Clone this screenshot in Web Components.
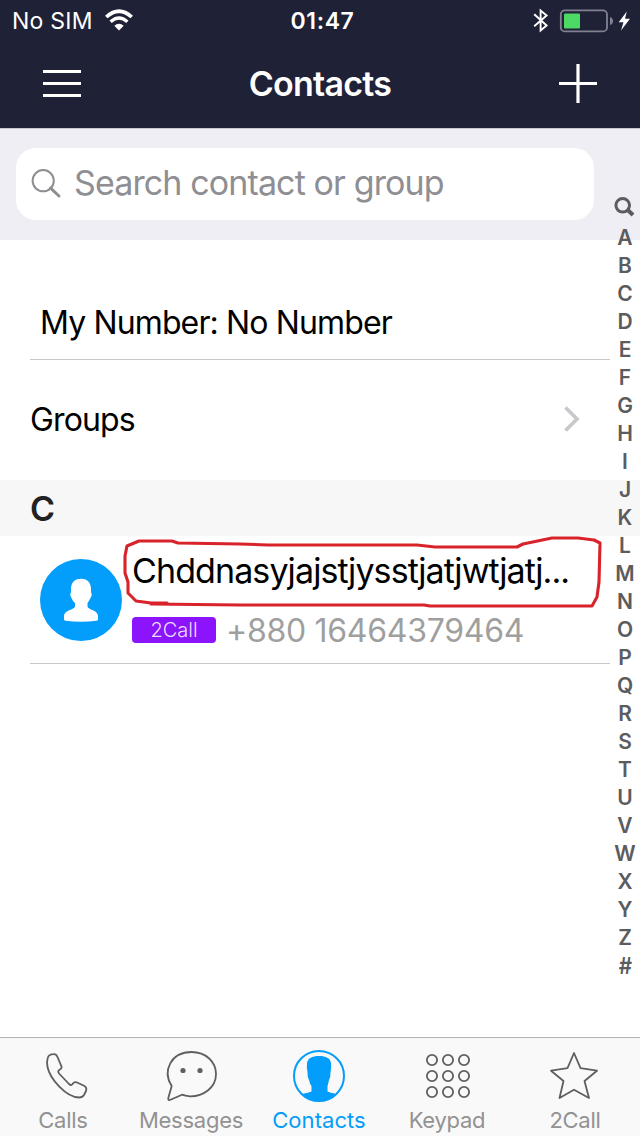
<!DOCTYPE html>
<html lang="en">
<head>
<meta charset="utf-8">
<title>Contacts</title>
<style>
html,body{margin:0;padding:0;background:#fff}
body{font-family:Inter,"Liberation Sans",sans-serif;color:#000;width:640px;height:1136px;overflow:hidden}
</style>
</head>
<body>
<contacts-app></contacts-app>
<script>
const define = (name, css, html) => customElements.define(name, class extends HTMLElement {
  constructor() {
    super();
    const t = document.createElement('template');
    t.innerHTML = `<style>*{box-sizing:border-box}svg{display:block;flex:none;overflow:visible}${css}</style>${typeof html === 'function' ? html(this) : html}`;
    this.attachShadow({mode: 'open'}).appendChild(t.content.cloneNode(true));
  }
});

define('status-bar', `
:host{display:grid;grid-template-columns:1fr auto 1fr;align-items:center;height:40px;padding:1px 11px 0 12px;color:#fff;font-size:23px;line-height:40px;white-space:nowrap}
.l,.r{display:flex;align-items:center}
.l{letter-spacing:.25px}.l svg{margin-left:12px}svg{margin-top:-1px}
.r{justify-content:flex-end}.r svg{margin-top:-3px}
.t{font-weight:600;letter-spacing:.6px;margin-left:4px}`, `
<div class="l"><span>No SIM</span>
<svg width="28" height="21" viewBox="0 0 28 21"><g fill="none" stroke="#fff"><path d="M1.3 7Q14-4.6 26.7 7" stroke-width="3.7"/><path d="M5.6 11.7Q14 4.2 22.4 11.7" stroke-width="3.3"/></g><path d="M9.3 15.8Q14 11.6 18.7 15.8L14 20.5Z" fill="#fff"/></svg></div>
<div class="t">01:47</div>
<div class="r">
<svg width="16" height="26" viewBox="0 0 16 26"><path d="M1.2 7.3L13.6 18.5L7.6 23.5V3.5L13.6 8.5L1.2 19.3" fill="none" stroke="#fff" stroke-width="1.9"/></svg>
<svg width="70" height="26" viewBox="0 0 70 26" style="margin-left:10px"><rect x="1.8" y="3.4" width="46.2" height="21" rx="4" fill="none" stroke="#808290" stroke-width="1.8"/><rect x="5" y="6.5" width="16" height="15" rx="1" fill="#4cd964"/><path d="M51 10Q54 11 54 14T51 18Z" fill="#808290"/><path d="M67.8 4.5L59.7 15.2H64.5L62 23.5L71 11.8H66Z" fill="#fff"/></svg></div>`);

define('nav-bar', `
:host{display:flex;align-items:center;justify-content:space-between;height:88px;padding:0 43px;color:#fff}
h1{margin:0;font-size:34px;font-weight:600;line-height:88px;letter-spacing:-.75px;height:88px}`, `
<svg width="38" height="40" viewBox="0 0 38 40"><path d="M0 7.5H38M0 19.5H38M0 31.5H38" stroke="#fff" stroke-width="3"/></svg>
<h1><slot></slot></h1>
<svg width="38" height="40" viewBox="0 0 38 40"><path d="M0 19.5H38M19 0V39" stroke="#fff" stroke-width="3.2"/></svg>`);

define('search-box', `
:host{display:block;height:112px;padding:19px 46px 20px 16px;background:#efeef4;border-top:1px solid #c6c6cc}
.b{display:flex;align-items:center;height:72px;border-radius:20px;background:#fff;padding:0 0 0 15px;color:#8e8e93;font-size:34px}
span{margin-left:13px;line-height:70px;height:72px;white-space:nowrap;letter-spacing:-.88px}`, `
<div class="b"><svg width="30" height="30" viewBox="0 0 30 30"><circle cx="12.2" cy="11.7" r="10.6" fill="none" stroke="#8e8e93" stroke-width="2"/><path d="M19.6 19.1L28 27" stroke="#8e8e93" stroke-width="3" stroke-linecap="round"/></svg><span><slot></slot></span></div>`);

define('list-row', `
:host{display:flex;align-items:center;justify-content:space-between;height:120px;margin-left:30px;width:580px;padding:0 30px 0 0;font-size:32px;line-height:40px;letter-spacing:-.87px;white-space:nowrap}
:host([ruled]){border-bottom:1px solid #c8c7cc;padding:47px 0 0 10px}
svg{margin-top:-2px}`, h => `
<span><slot></slot></span>${h.hasAttribute('arrow') ? '<svg width="18" height="28" viewBox="0 0 18 28"><path d="M3.5 2.5L15 14L3.5 25.5" fill="none" stroke="#c7c7cc" stroke-width="3.6"/></svg>' : ''}`);

define('section-header', `
:host{display:flex;align-items:center;height:56px;padding:1px 0 0 30px;background:#f7f7f7;color:#222;font-size:34px;font-weight:600}`, `<slot></slot>`);

define('contact-row', `
:host{display:flex;position:relative;height:128px;width:580px;margin-left:30px;padding-left:10px;border-bottom:1px solid #c8c7cc;white-space:nowrap}
.av{margin-top:23px}
.c{display:flex;flex-direction:column;margin-left:10px}
.n{font-size:34px;line-height:40px;margin-top:15px;letter-spacing:-.9px}
.p{display:flex;align-items:center;gap:10px;margin-top:19px;height:40px;color:#9f9f9f;font-size:32px;font-weight:400}
.ph{letter-spacing:-.28px}
.tag{width:84px;height:26px;border-radius:4px;background:#8b14fd;color:#eadcff;font-size:20px;font-weight:300;line-height:26px;text-align:center}
.mark{position:absolute;left:90px;top:-6px}`, `
<svg class="av" width="82" height="82" viewBox="0 0 82 82"><circle cx="41" cy="41" r="41" fill="#039dfc"/><path d="M41 19.8C48 19.8 51 24.5 51 30V33.5Q52.5 34.5 51 38Q49 42 47.5 44V47.5C48 51 58 51 58 57V60.5Q58 61.5 56.5 61.8Q41 63.5 25.5 61.8Q24 61.5 24 60.5V57C24 51 34.5 51 35 47.5V44Q32.5 42 31 38Q29.5 34.5 31 33.5V30C31 24.5 34 19.8 41 19.8Z" fill="#fff"/></svg>
<div class="c"><div class="n"><slot name="name"></slot></div>
<div class="p"><span class="tag"><slot name="tag"></slot></span><span class="ph"><slot name="phone"></slot></span></div></div>
<svg class="mark" width="484" height="80" viewBox="120 530 484 80"><path d="M167 603H151L136 601L128 593V582L125 573V556L127 546L139 541H172L178 543L240 544L268 545H417L435 547H517L523 544L552 538H578L594 540L600 543L599 582L597 597L592 606H430L424 605H320L240 605L151 604" fill="none" stroke="#d9232b" stroke-width="3.1" stroke-linejoin="round" stroke-linecap="round"/></svg>`);

define('alpha-index', `
:host{display:flex;flex-direction:column;align-items:center;position:absolute;left:610px;top:195px;width:30px;color:#5c5c5e;font-size:21px;font-weight:600}
svg{margin:2px 0 4px;height:23px}
span{height:28.03px;line-height:28px}
.h{font-size:23px;transform:scaleX(.9)}`, `
<svg width="22" height="23" viewBox="0 0 22 23"><circle cx="8.7" cy="8.3" r="6.8" fill="none" stroke="#5c5c5e" stroke-width="3"/><path d="M13.5 12.8L19 18" stroke="#5c5c5e" stroke-width="4"/></svg>
${[...'ABCDEFGHIJKLMNOPQRSTUVWXYZ'].map(c => `<span>${c}</span>`).join('')}<span class="h">#</span>`);

const icons = {
calls: '<path d="M57.5 1057Q56.3 1054 53.5 1054.2Q48.8 1054.3 47.7 1058Q46.4 1062 47.5 1067C50 1079 66 1097 79 1097.5Q82.5 1097.5 84 1095L86 1091Q87.3 1087.5 84 1085.8L76.5 1082.3Q74.2 1081.5 72.6 1084Q71.2 1086 69 1084L59.5 1074Q57 1071 59.5 1069.7Q62.5 1068 61.3 1066Z"/>',
messages: '<path d="M171.7 1086C162 1071 171 1052 191.5 1052C206 1052 216 1062 216 1074C216 1088 203 1096.5 190 1096.3Q185 1096 182 1094.7L170.5 1099.8Q168 1101 168.3 1098Z"/><g fill="#5f5f5f"><circle cx="183" cy="1070.5" r="1.7"/><circle cx="200" cy="1070.5" r="1.7"/></g>',
contacts: '<circle cx="319" cy="1076" r="25" stroke="#039dfc" stroke-width="2"/><path d="M302 1094Q309 1092.5 311.5 1091.5V1086Q309.8 1084 309 1080Q307.3 1077 307.5 1072Q306.5 1068 307 1063C308 1058 312 1056 319 1056C326 1056 330 1058 331 1063Q331.5 1068 330.5 1072Q330.7 1077 329 1080Q328.2 1084 327.5 1086V1091.5Q330 1092.5 336 1094A25 25 0 0 1 302 1094Z" fill="#039dfc" stroke="none"/>',
keypad: [432,448,464].map(x => [1060,1076,1092].map(y => `<circle cx="${x}" cy="${y}" r="5.1"/>`).join('')).join(''),
star: '<path d="M574 1053L580.5 1068.2L597 1070.7L584.5 1081L589 1098L574 1089.7L559.5 1098L563.5 1081L551 1070.7L567.5 1068.2Z"/>'
};
define('tab-item', `
:host{display:flex;flex-direction:column;align-items:center;width:128px;color:#929292;font-size:22px;white-space:nowrap}
:host([active]){color:#039dfc}
svg{margin-top:6px}
span{line-height:28px;margin-top:6px;letter-spacing:-.25px}
:host([active]) span{letter-spacing:.05px}`, h => `
<svg width="64" height="56" viewBox="${h.getAttribute('cx') - 32} 1044 64 56" fill="none" stroke="#5f5f5f" stroke-width="1.8" stroke-linejoin="round">${icons[h.getAttribute('icon')]}</svg><span><slot></slot></span>`);

define('tab-bar', `
:host{display:flex;height:99px;background:#f9f9f9;border-top:1px solid #b2b2b2}
slot{display:flex;margin-left:-1px}`, `<slot></slot>`);

define('contacts-app', `
:host{display:flex;flex-direction:column;position:relative;width:640px;height:1136px;background:#fff}
header{background:#1f2136}
main{flex:1}`, `
<header><status-bar></status-bar><nav-bar>Contacts</nav-bar></header>
<search-box>Search contact or group</search-box>
<main>
<list-row ruled>My Number: No Number</list-row>
<list-row arrow>Groups</list-row>
<section-header>C</section-header>
<contact-row><span slot="name">Chddnasyjajstjysstjatjwtjatj...</span><span slot="tag">2Call</span><span slot="phone">+880 16464379464</span></contact-row>
</main>
<alpha-index></alpha-index>
<tab-bar>
<tab-item icon="calls" cx="63">Calls</tab-item><tab-item icon="messages" cx="191">Messages</tab-item><tab-item icon="contacts" cx="319" active>Contacts</tab-item><tab-item icon="keypad" cx="447">Keypad</tab-item><tab-item icon="star" cx="575">2Call</tab-item>
</tab-bar>`);
</script>
</body>
</html>
